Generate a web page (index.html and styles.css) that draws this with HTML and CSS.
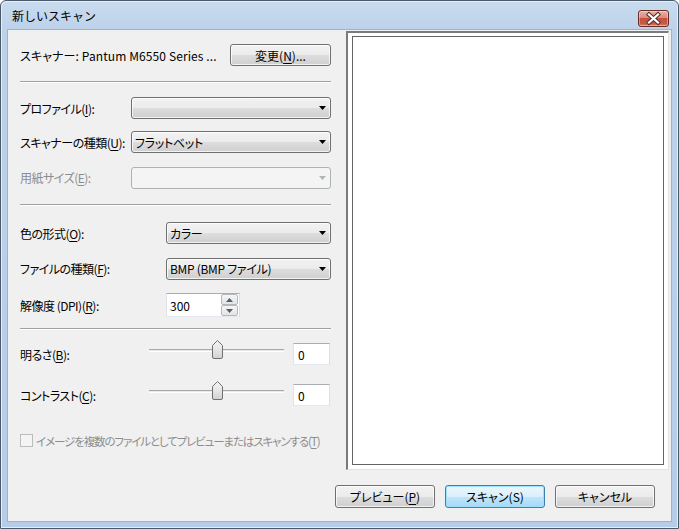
FILE: index.html
```html
<!DOCTYPE html>
<html lang="ja">
<head>
<meta charset="utf-8">
<title>新しいスキャン</title>
<link rel="stylesheet" href="styles.css">
</head>
<body>
<div class="window">
  <div class="titlebar">
    <span class="title">新しいスキャン</span>
    <div class="close">
      <svg width="31" height="17" viewBox="0 0 31 17">
        <path d="M11 4.5 L20 12.5 M20 4.5 L11 12.5" stroke="#5a2a25" stroke-width="4.2" stroke-linecap="square" fill="none"/>
        <path d="M11 4.5 L20 12.5 M20 4.5 L11 12.5" stroke="#ffffff" stroke-width="2.3" stroke-linecap="square" fill="none"/>
      </svg>
    </div>
  </div>
  <div class="client">
    <div class="main">
      <div class="left">
        <div class="row r-scanner">
          <span class="scanner-name">スキャナー: Pantum M6550 Series ...</span>
          <div class="btn btn-change">変更(<u>N</u>)...</div>
        </div>
        <div class="sep s1"></div>
        <div class="row r-profile">
          <span class="lbl lbl-a">プロファイル(<u>I</u>):</span>
          <div class="combo combo-a"><span class="combo-text"></span><svg class="arrow" width="7" height="4" viewBox="0 0 7 4"><path d="M0 0H7L3.5 4Z" fill="#000"/></svg></div>
        </div>
        <div class="row r-type">
          <span class="lbl lbl-a">スキャナーの種類(<u>U</u>):</span>
          <div class="combo combo-a"><span class="combo-text">フラットベット</span><svg class="arrow" width="7" height="4" viewBox="0 0 7 4"><path d="M0 0H7L3.5 4Z" fill="#000"/></svg></div>
        </div>
        <div class="row r-paper">
          <span class="lbl lbl-a disabled">用紙サイズ(<u>E</u>):</span>
          <div class="combo combo-a combo-disabled"><span class="combo-text"></span><svg class="arrow" width="7" height="4" viewBox="0 0 7 4"><path d="M0 0H7L3.5 4Z" fill="#b4b4b4"/></svg></div>
        </div>
        <div class="sep s2"></div>
        <div class="row r-color">
          <span class="lbl lbl-b">色の形式(<u>O</u>):</span>
          <div class="combo combo-b"><span class="combo-text">カラー</span><svg class="arrow" width="7" height="4" viewBox="0 0 7 4"><path d="M0 0H7L3.5 4Z" fill="#000"/></svg></div>
        </div>
        <div class="row r-file">
          <span class="lbl lbl-b">ファイルの種類(<u>F</u>):</span>
          <div class="combo combo-b"><span class="combo-text">BMP (BMP ファイル)</span><svg class="arrow" width="7" height="4" viewBox="0 0 7 4"><path d="M0 0H7L3.5 4Z" fill="#000"/></svg></div>
        </div>
        <div class="row r-dpi">
          <span class="lbl lbl-b">解像度 (DPI)(<u>R</u>):</span>
          <div class="spin">
            <span class="spin-text">300</span>
            <div class="spin-btns">
              <div class="spin-btn"><svg width="7" height="4" viewBox="0 0 7 4"><path d="M0 4H7L3.5 0Z" fill="#4c607a"/></svg></div>
              <div class="spin-btn"><svg width="7" height="4" viewBox="0 0 7 4"><path d="M0 0H7L3.5 4Z" fill="#4c607a"/></svg></div>
            </div>
          </div>
        </div>
        <div class="sep s3"></div>
        <div class="row r-bright">
          <span class="lbl lbl-c">明るさ(<u>B</u>):</span>
          <div class="slider">
            <div class="track"></div>
            <svg class="thumb" width="11" height="19" viewBox="0 0 11 19"><defs><linearGradient id="tg" x1="0" y1="0" x2="0" y2="1"><stop offset="0" stop-color="#f4f4f4"/><stop offset="0.5" stop-color="#e6e6e6"/><stop offset="1" stop-color="#d2d2d2"/></linearGradient></defs><path d="M0.5 5.5 L5.5 0.5 L10.5 5.5 V17 Q10.5 18.5 9 18.5 H2 Q0.5 18.5 0.5 17 Z" fill="url(#tg)" stroke="#707070"/></svg>
          </div>
          <div class="numbox">0</div>
        </div>
        <div class="row r-contrast">
          <span class="lbl lbl-c">コントラスト(<u>C</u>):</span>
          <div class="slider">
            <div class="track"></div>
            <svg class="thumb" width="11" height="19" viewBox="0 0 11 19"><path d="M0.5 5.5 L5.5 0.5 L10.5 5.5 V17 Q10.5 18.5 9 18.5 H2 Q0.5 18.5 0.5 17 Z" fill="url(#tg)" stroke="#707070"/></svg>
          </div>
          <div class="numbox">0</div>
        </div>
        <div class="row r-check">
          <span class="checkbox"></span>
          <span class="check-label disabled">イメージを複数のファイルとしてプレビューまたはスキャンする(<u>T</u>)</span>
        </div>
      </div>
      <div class="preview"><div class="preview-inner"></div></div>
    </div>
    <div class="buttons">
      <div class="btn btn-action">プレビュー(<u>P</u>)</div>
      <div class="btn btn-action btn-default">スキャン(S)</div>
      <div class="btn btn-action">キャンセル</div>
    </div>
  </div>
</div>
</body>
</html>
```
FILE: styles.css
```css
* { box-sizing: border-box; }
html, body { margin: 0; padding: 0; }
body {
  width: 679px;
  height: 529px;
  background: #ffffff;
  font-family: "Noto Sans CJK JP", "Noto Sans", sans-serif;
  font-size: 12px;
  font-weight: 400;
  font-feature-settings: "palt";
  color: #000;
  overflow: hidden;
}
u { text-decoration: underline; text-underline-offset: 2px; }

.window {
  width: 679px;
  height: 529px;
  display: flex;
  flex-direction: column;
  border: 1px solid #4a5a6a;
  border-radius: 6px 6px 0 0;
  background: linear-gradient(#c9dbee 0px, #bcd2ea 30px, #b5cde8 100%);
  box-shadow: inset 1px 1px 0 #e6eef8, inset -1px -1px 0 #e6eef8;
}

.titlebar {
  height: 29px;
  display: flex;
  align-items: flex-start;
  flex: none;
}
.title {
  padding: 7px 0 0 11px;
  font-size: 12px;
  line-height: 16px;
  color: #000;
  font-feature-settings: normal;
}
.close {
  margin: 9px 9px 0 auto;
  width: 31px;
  height: 17px;
  border: 1px solid #6b2e26;
  border-radius: 3px;
  background: linear-gradient(#e8b3a8 0%, #d98c7e 45%, #c8503c 50%, #c75a45 85%, #d98a6e 100%);
  box-shadow: inset 0 0 0 1px rgba(255,255,255,0.35);
  display: flex;
  align-items: center;
  justify-content: center;
  overflow: hidden;
}
.close svg { display: block; margin: -1px; }

.client {
  margin: 0 7px;
  height: 491px;
  background: #f0f0f0;
  display: flex;
  flex-direction: column;
  padding-top: 1px;
  flex: none;
  box-shadow: 0 0 0 1px #9fb3c8;
}

.main {
  display: flex;
  height: 439px;
}

.left {
  width: 338px;
  padding-left: 12px;
  display: flex;
  flex-direction: column;
}

.row {
  display: flex;
  align-items: center;
  width: 311px;
  height: 22px;
  flex: none;
}
.r-scanner { margin-top: 13px; justify-content: space-between; }
.r-profile { margin-top: 14px; }
.r-type { margin-top: 12px; }
.r-paper { margin-top: 13px; height: 23px; }
.r-color { margin-top: 16px; }
.r-file { margin-top: 13px; height: 23px; }
.r-dpi { margin-top: 13px; height: 24px; }
.r-bright { margin-top: 13px; }
.r-contrast { margin-top: 19px; }
.r-check { margin-top: 28px; height: 13px; }

.sep {
  width: 311px;
  height: 2px;
  flex: none;
  border-top: 1px solid #a0a0a0;
  border-bottom: 1px solid #ffffff;
}
.s1 { margin-top: 15px; }
.s2 { margin-top: 15px; }
.s3 { margin-top: 11px; }

.scanner-name { white-space: nowrap; letter-spacing: 0.1px; }
.lbl { white-space: nowrap; flex: none; letter-spacing: -0.5px; }
.lbl-a { width: 111px; }
.lbl-b { width: 146px; }
.lbl-c { width: 129px; }
.disabled { color: #8d8d8d; }

.btn {
  border: 1px solid #707070;
  border-radius: 3px;
  background: linear-gradient(#f2f2f2 0%, #ebebeb 50%, #dddddd 51%, #cfcfcf 100%);
  box-shadow: inset 0 0 0 1px rgba(255,255,255,0.75);
  display: flex;
  align-items: center;
  justify-content: center;
  white-space: nowrap;
}
.btn-change { width: 101px; height: 22px; }

.combo {
  position: relative;
  height: 22px;
  border: 1px solid #707070;
  border-radius: 3px;
  background: linear-gradient(#f2f2f2 0%, #ebebeb 50%, #dddddd 51%, #cfcfcf 100%);
  box-shadow: inset 0 0 0 1px rgba(255,255,255,0.75);
  display: flex;
  align-items: center;
  padding-left: 3px;
}
.combo-a { width: 200px; }
.combo-b { width: 165px; }
.combo-disabled {
  border-color: #adb2b5;
  background: #f4f4f4;
  box-shadow: none;
}
.combo-text { flex: 1; white-space: nowrap; letter-spacing: -0.3px; }
.arrow { margin-right: 4px; flex: none; }

.spin {
  width: 74px;
  height: 24px;
  border: 1px solid #abadb3;
  border-color: #abadb3 #dbdfe6 #e3e9ef #e2e3ea;
  background: #fff;
  display: flex;
  align-items: center;
  padding-left: 3px;
}
.spin-text { flex: 1; }
.spin-btns {
  width: 18px;
  height: 22px;
  display: flex;
  flex-direction: column;
  justify-content: space-between;
  padding: 0 1px 0 0;
}
.spin-btn {
  height: 11px;
  border: 1px solid #b8b8b8;
  border-radius: 2px;
  background: linear-gradient(#f6f6f6, #e4e4e4);
  display: flex;
  align-items: center;
  justify-content: center;
}

.slider {
  position: relative;
  width: 135px;
  height: 22px;
}
.track {
  position: absolute;
  left: 0;
  right: 0;
  top: 6px;
  height: 3px;
  border-top: 1px solid #a8a8a8;
  border-bottom: 1px solid #ffffff;
  background: #e7eaea;
}
.thumb {
  position: absolute;
  left: 63px;
  top: -3px;
}
.numbox {
  margin-left: 9px;
  width: 37px;
  height: 22px;
  border: 1px solid #abadb3;
  border-color: #abadb3 #dbdfe6 #e3e9ef #e2e3ea;
  background: #fff;
  padding-left: 4px;
  display: flex;
  align-items: center;
}

.checkbox {
  width: 13px;
  height: 13px;
  border: 1px solid #bcbcbc;
  background: #f4f4f4;
  flex: none;
}
.check-label {
  margin-left: 3px;
  white-space: nowrap;
  font-size: 11.5px;
  letter-spacing: -1.1px;
}

.preview {
  width: 323px;
  height: 439px;
  margin-left: 0;
  border-style: solid;
  border-width: 2px 1px 1px 2px;
  border-color: #7a7a7a #e3e3e3 #e3e3e3 #7a7a7a;
  background: #fff;
  padding: 3px 4px 4px 4px;
}
.preview-inner {
  width: 100%;
  height: 100%;
  border: 1px solid #646464;
  background: #fff;
}

.buttons {
  display: flex;
  justify-content: flex-end;
  gap: 10px;
  margin-top: 15px;
  padding-right: 16px;
}
.btn-action { width: 100px; height: 23px; }
.btn-default {
  border-color: #3c7fb1;
  background: linear-gradient(#eaf6fd 0%, #d9f0fc 50%, #bee6fd 51%, #a7d9f5 100%);
  box-shadow: inset 0 0 0 1px #9ee0fb;
}
```
